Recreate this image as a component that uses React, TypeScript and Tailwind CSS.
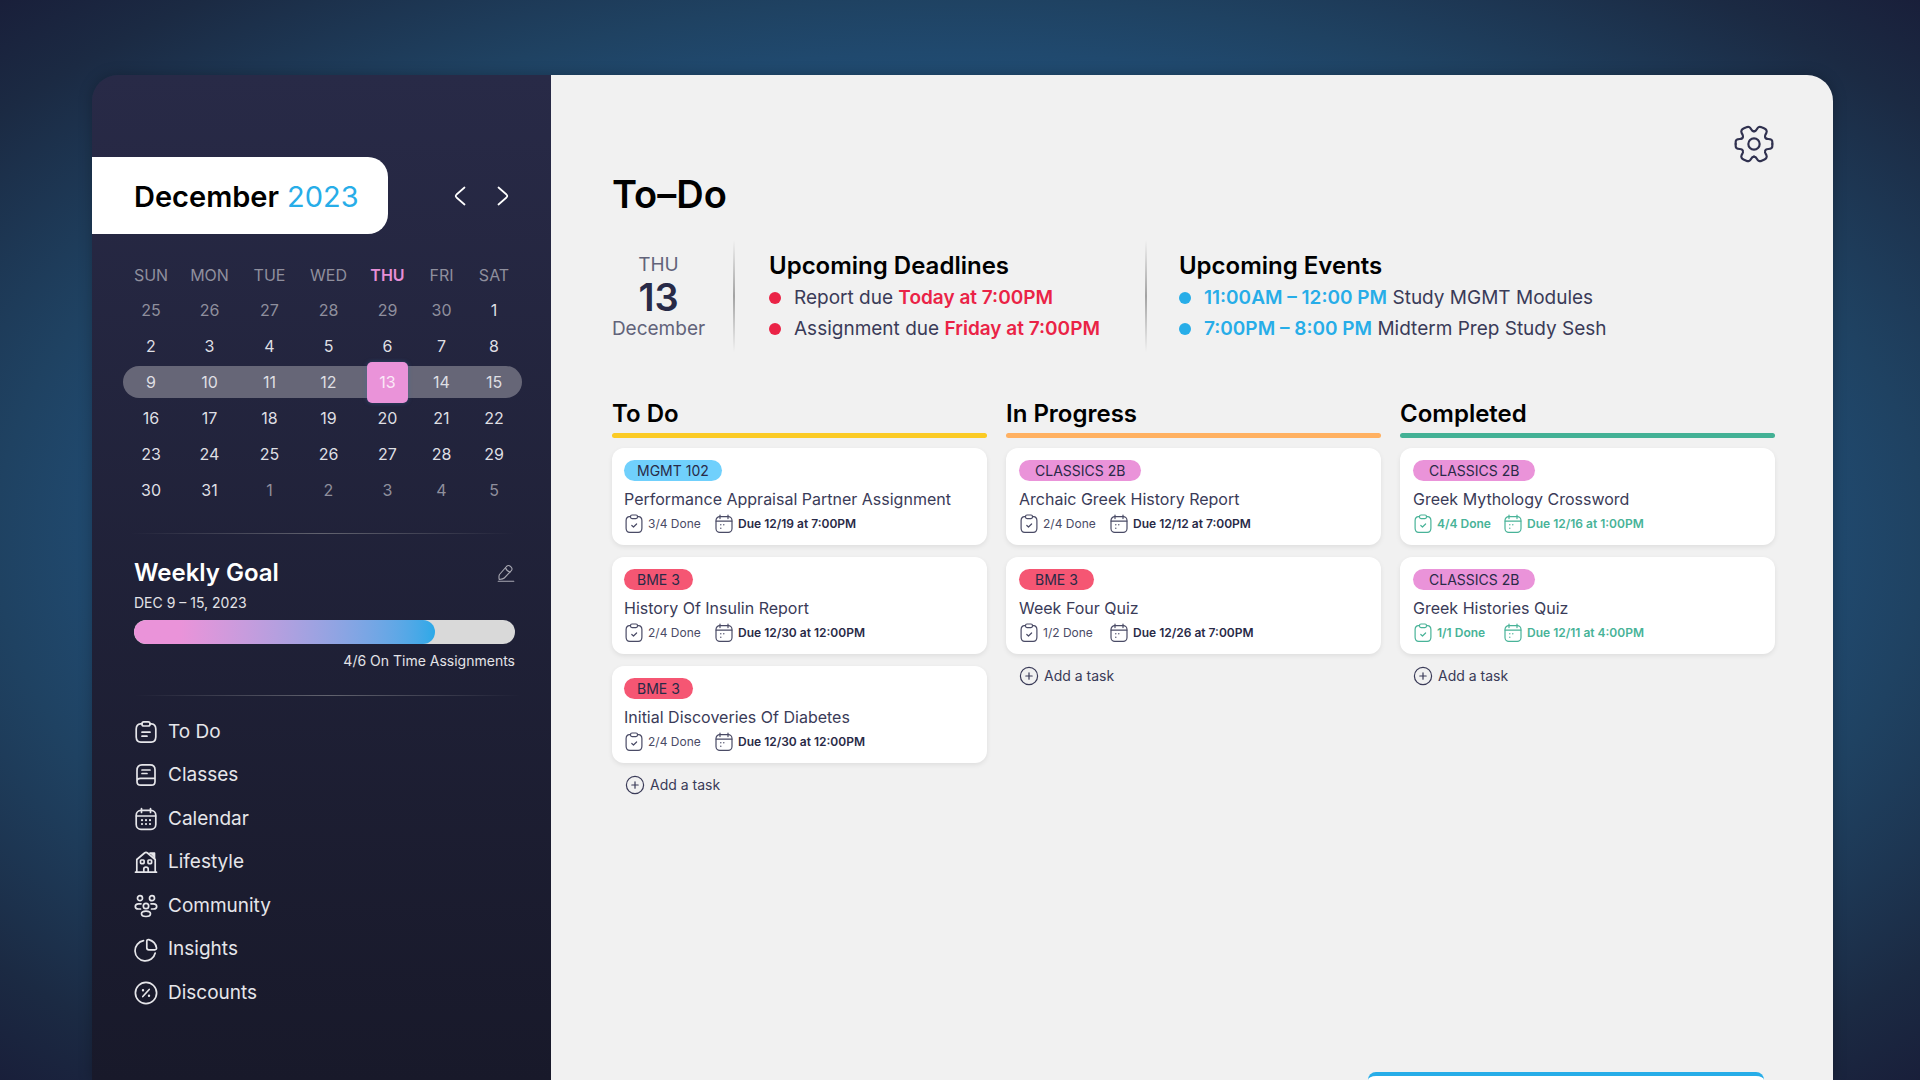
import type { ReactNode } from "react";
import clsx from "clsx";

type IconProps = { className?: string };

function Icon({ className, children, box = 24, stroke = 1.7 }: IconProps & { children: ReactNode; box?: number; stroke?: number }) {
  return (
    <svg
      aria-hidden="true"
      viewBox={`0 0 ${box} ${box}`}
      fill="none"
      stroke="currentColor"
      strokeWidth={stroke}
      strokeLinecap="round"
      strokeLinejoin="round"
      className={clsx("shrink-0", className)}
    >
      {children}
    </svg>
  );
}

const TodoIcon = () => (
  <Icon className="size-6">
    <path d="M8 3.8H6.5Q2.3 4 2.2 9v8q.2 5 4.6 5.2h10.4Q21.6 22 21.8 17V9Q21.7 4 17.5 3.8H16" />
    <rect x="8" y="1.8" width="8" height="4.2" rx="1.8" />
    <path d="M8 12.2h8M8 16.2h5" />
  </Icon>
);

const ClassesIcon = () => (
  <Icon className="size-6">
    <path d="M3 18V7.5Q3 1.800 8 1.800h8q5 0 5 5V18.5q0 3.700-3.700 3.700H6.800Q3 22.200 3 18.500q0-3.200 3.500-3.200H21" />
    <path d="M8 7h8M8 10.5h5" />
  </Icon>
);

const CalendarIcon = () => (
  <Icon className="size-6">
    <path d="M7.5 1.5v4M16.5 1.5v4M2.5 9h19" />
    <rect x="2.2" y="3.4" width="19.6" height="19" rx="4.8" />
    <path d="M8 13.2h.01M12 13.2h.01M16 13.2h.01M8 17h.01M12 17h.01M16 17h.01" strokeWidth="2.2" />
  </Icon>
);

const LifestyleIcon = () => (
  <Icon className="size-6">
    <path d="M1.5 22.2h21M2.8 22V9.5L10.5 3q1.5-1.2 3 0l7.7 6.5V22" />
    <path d="M16 3.2h4.5V8" fill="currentColor" />
    <rect x="6.5" y="10" width="3.6" height="3.6" rx=".8" />
    <rect x="14" y="10" width="3.6" height="3.6" rx=".8" />
    <path d="M9.800 22v-3q0-1.800 2.200-1.800t2.200 1.800v3" />
  </Icon>
);

const CommunityIcon = () => (
  <Icon className="size-6">
    <circle cx="6" cy="4.2" r="2.5" />
    <circle cx="18" cy="4.2" r="2.5" />
    <circle cx="12" cy="12" r="2.7" />
    <ellipse cx="12" cy="19.8" rx="4.5" ry="2.7" />
    <path d="M6.5 15H4.5Q1.3 14.8 1.3 12.4T4.5 9.800H7M17.500 15h2q3.200-.2 3.200-2.600T19.500 9.800H17" />
  </Icon>
);

const InsightsIcon = () => (
  <Icon className="size-6">
    <path d="M9.5 2.7A10.2 10.2 0 1 0 21.2 15" />
    <path d="M22.500 9.800Q21.500 3.500 14.800 1.600q-2-.2-2 1.800v6.400q0 2 2 2h6q1.900 0 1.700-2Z" />
  </Icon>
);

const DiscountsIcon = () => (
  <Icon className="size-6">
    <circle cx="12" cy="12" r="10.6" />
    <path d="M15.2 8.5 8.8 15.5" />
    <path d="M9 9.2h.01M15 14.8h.01" strokeWidth="2.4" />
  </Icon>
);

const DoneIcon = () => (
  <Icon className="size-5" box={20} stroke={1.2}>
    <path d="M6.500 2.600H5.500Q2.200 2.800 2.100 6.500v7.700q.1 4.100 3.700 4.200h8.400q3.600-.1 3.700-4.200V6.500q-.1-3.700-3.400-3.900H13.500" />
    <rect x="6.5" y="1" width="7" height="3.6" rx="1.5" />
    <path d="m7.800 11.500 1.700 1.500 3.100-3" />
  </Icon>
);

const DueIcon = () => (
  <Icon className="size-5" box={20} stroke={1.2}>
    <path d="M6 1v3.6M14 1v3.6M2.2 7.2h15.6" />
    <rect x="2" y="2.6" width="16" height="15.8" rx="3.8" />
    <path d="M6.8 10.8h.01M9.8 10.8h.01M6.8 14.2h.01" strokeWidth="1.4" />
  </Icon>
);

const AddIcon = () => (
  <Icon className="size-5" box={20} stroke={1.2}>
    <circle cx="10" cy="10" r="8.6" />
    <path d="M10 6.8v6.4M6.8 10h6.4" />
  </Icon>
);

const EditIcon = () => (
  <Icon className="size-[18px]" box={18} stroke={1.1}>
    <path d="M2.5 10.5 9.500 2.500q2-2 4 0 2.600 2 .8 4.200L7.300 14q-1 1-5.100 1.500-.6-3.500.3-5Z" />
    <path d="M8.500 3.800q1.200 3.400 4.600 4.200M1.200 17.300h15.600" />
  </Icon>
);

function GearIcon() {
  const quarter =
    "M0-38C4-38 7-41 9-45C12-51 17-53 23-50L30-47C37-44 40-39 37-33C35-29 32-25 33-22C34-17 38-15 43-15C51-15 55-12 55-6V0";
  return (
    <svg aria-hidden="true" viewBox="-60 -60 120 120" fill="none" stroke="currentColor" strokeWidth="6.5" strokeLinecap="round" className="size-10">
      <path d={quarter} />
      <path d={quarter} transform="scale(-1 1)" />
      <path d={quarter} transform="scale(1 -1)" />
      <path d={quarter} transform="scale(-1 -1)" />
      <circle r="17" />
    </svg>
  );
}

const weekdays = [
  { name: "SUN", width: "w-[56px]" },
  { name: "MON", width: "w-[61px]" },
  { name: "TUE", width: "w-[59px]" },
  { name: "WED", width: "w-[59px]" },
  { name: "THU", width: "w-[59px]" },
  { name: "FRI", width: "w-[49px]" },
  { name: "SAT", width: "w-[56px]" },
];

const weeks = [
  [25, 26, 27, 28, 29, 30, 1],
  [2, 3, 4, 5, 6, 7, 8],
  [9, 10, 11, 12, 13, 14, 15],
  [16, 17, 18, 19, 20, 21, 22],
  [23, 24, 25, 26, 27, 28, 29],
  [30, 31, 1, 2, 3, 4, 5],
];

const navItems = [
  { label: "To Do", icon: <TodoIcon /> },
  { label: "Classes", icon: <ClassesIcon /> },
  { label: "Calendar", icon: <CalendarIcon /> },
  { label: "Lifestyle", icon: <LifestyleIcon /> },
  { label: "Community", icon: <CommunityIcon /> },
  { label: "Insights", icon: <InsightsIcon /> },
  { label: "Discounts", icon: <DiscountsIcon /> },
];

type Task = { course: string; title: string; done: string; due: string };

const courseColors: Record<string, string> = {
  "MGMT 102": "bg-[#70d0fc]",
  "BME 3": "bg-[#f55673]",
  "CLASSICS 2B": "bg-[#ea93d9]",
};

const columns: { title: string; bar: string; inset: string; tag: string; complete?: boolean; tasks: Task[] }[] = [
  {
    title: "To Do",
    bar: "bg-[#fbcb25]",
    inset: "px-3",
    tag: "px-[13px]",
    tasks: [
      { course: "MGMT 102", title: "Performance Appraisal Partner Assignment", done: "3/4 Done", due: "Due 12/19 at 7:00PM" },
      { course: "BME 3", title: "History Of Insulin Report", done: "2/4 Done", due: "Due 12/30 at 12:00PM" },
      { course: "BME 3", title: "Initial Discoveries Of Diabetes", done: "2/4 Done", due: "Due 12/30 at 12:00PM" },
    ],
  },
  {
    title: "In Progress",
    bar: "bg-[#ffb162]",
    inset: "px-[13px]",
    tag: "px-4",
    tasks: [
      { course: "CLASSICS 2B", title: "Archaic Greek History Report", done: "2/4 Done", due: "Due 12/12 at 7:00PM" },
      { course: "BME 3", title: "Week Four Quiz", done: "1/2 Done", due: "Due 12/26 at 7:00PM" },
    ],
  },
  {
    title: "Completed",
    bar: "bg-[#43b195]",
    inset: "px-[13px]",
    tag: "px-4",
    complete: true,
    tasks: [
      { course: "CLASSICS 2B", title: "Greek Mythology Crossword", done: "4/4 Done", due: "Due 12/16 at 1:00PM" },
      { course: "CLASSICS 2B", title: "Greek Histories Quiz", done: "1/1 Done", due: "Due 12/11 at 4:00PM" },
    ],
  },
];

function Calendar() {
  return (
    <table className="mt-6 ml-[31px] w-[399px] table-fixed border-collapse text-center text-base text-[#dfdfe3]">
      <thead>
        <tr className="h-[34px]">
          {weekdays.map((day) => (
            <th
              key={day.name}
              scope="col"
              className={clsx("p-0", day.width, day.name === "THU" ? "font-semibold text-[#e78ed6]" : "font-normal text-[#8f8f9d]")}
            >
              {day.name}
            </th>
          ))}
        </tr>
      </thead>
      <tbody>
        {weeks.map((week, row) => (
          <tr key={row} className="h-9">
            {week.map((date, column) => {
              const outside = (row === 0 && date > 20) || (row === 5 && date < 10);
              const current = row === 2;
              return (
                <td key={column} className="p-0">
                  <div
                    className={clsx(
                      "flex h-8 items-center justify-center",
                      outside && "text-[#8f8f9d]",
                      current && "bg-[#666677]",
                      current && column === 0 && "rounded-l-full",
                      current && column === 6 && "rounded-r-full",
                    )}
                  >
                    {current && date === 13 ? (
                      <span className="flex size-[41px] shrink-0 items-center justify-center rounded-[5px] bg-[#ea93d9] text-[#fbe9f7] shadow-[0_0_4px_#3a6f9e80]">
                        13
                      </span>
                    ) : (
                      date
                    )}
                  </div>
                </td>
              );
            })}
          </tr>
        ))}
      </tbody>
    </table>
  );
}

const Divider = ({ className }: { className: string }) => (
  <hr className={clsx("h-px border-0 bg-linear-to-r from-transparent via-[#62636f] to-transparent", className)} />
);

function Sidebar() {
  return (
    <aside className="flex w-[459px] shrink-0 flex-col bg-linear-to-b from-[#282a47] to-[#18192a] pt-[82px]">
      <div className="flex items-center">
        <h2 className="flex h-[77px] w-[296px] items-center gap-2 rounded-r-[20px] bg-white pt-[3px] pl-[42px] text-[29px] font-semibold text-black">
          December <span className="font-normal text-[#27ade8]">2023</span>
        </h2>
        <div className="ml-[66px] flex gap-[31px] text-white">
          <button type="button" aria-label="Previous month">
            <svg viewBox="0 0 12 20" fill="none" stroke="currentColor" strokeWidth="1.7" strokeLinecap="round" strokeLinejoin="round" className="h-5 w-3">
              <path d="M10.500 1.500 2.500 8.500q-1.500 1.500 0 3l8 7" />
            </svg>
          </button>
          <button type="button" aria-label="Next month">
            <svg viewBox="0 0 12 20" fill="none" stroke="currentColor" strokeWidth="1.7" strokeLinecap="round" strokeLinejoin="round" className="h-5 w-3">
              <path d="m1.500 1.500 8 7q1.500 1.500 0 3l-8 7" />
            </svg>
          </button>
        </div>
      </div>

      <Calendar />

      <Divider className="mt-[25px] mr-[36px] ml-[38px]" />

      <section className="mt-[23px] mr-[36px] ml-[42px] text-[#e3e3e7]">
        <div className="flex items-center justify-between">
          <h2 className="text-2xl font-semibold text-white">Weekly Goal</h2>
          <button type="button" aria-label="Edit weekly goal" className="text-[#a8a8b2]">
            <EditIcon />
          </button>
        </div>
        <p className="mt-1 text-sm">DEC 9 – 15, 2023</p>
        <div className="mt-[7px] h-6 overflow-hidden rounded-full bg-[#d9d9d9]" role="progressbar" aria-label="On time assignments" aria-valuemin={0} aria-valuemax={6} aria-valuenow={4}>
          <div className="h-full w-[79%] rounded-full bg-linear-to-r from-[#ea93d9] from-15% to-[#2ba9e8]" />
        </div>
        <p className="mt-[7px] text-right text-sm">4/6 On Time Assignments</p>
      </section>

      <Divider className="mt-6 mr-[30px] ml-[42px]" />

      <nav aria-label="Main" className="mt-[14px] ml-[42px]">
        <ul className="grid h-[305px] auto-rows-fr">
          {navItems.map((item) => (
            <li key={item.label} className="flex">
              <a href="#" className="flex items-center gap-[10px] text-[19px] text-[#e6e6ea]">
                {item.icon}
                {item.label}
              </a>
            </li>
          ))}
        </ul>
      </nav>
    </aside>
  );
}

const Separator = () => <div className="w-[2px] self-stretch bg-linear-to-b from-transparent via-[#a3a3a3] to-transparent" />;

function Agenda({ title, dot, className, children }: { title: string; dot: string; className: string; children: ReactNode[] }) {
  return (
    <section className={clsx("pt-[10px]", className)}>
      <h2 className="text-2xl font-semibold text-black">{title}</h2>
      <ul className="text-[19px] leading-[31px] text-[#3a3b58]">
        {children.map((line, index) => (
          <li key={index} className="flex items-center gap-[13px]">
            <span className={clsx("size-3 shrink-0 rounded-full", dot)} />
            <span>{line}</span>
          </li>
        ))}
      </ul>
    </section>
  );
}

function TaskCard({ task, inset, tag, complete }: { task: Task; inset: string; tag: string; complete?: boolean }) {
  return (
    <li className={clsx("rounded-xl bg-white pt-3 pb-[11px] shadow-[0_2px_5px_#00000014]", inset)}>
      <p className={clsx("flex h-[21px] w-fit items-center rounded-full text-sm text-[#292a47]", tag, courseColors[task.course])}>
        {task.course}
      </p>
      <h3 className="mt-[6px] text-base text-[#3a3b58]">{task.title}</h3>
      <div className={clsx("mt-[3px] flex text-xs", complete ? "font-semibold text-[#48b398]" : "text-[#4a4b66]")}>
        <span className="flex w-[90px] items-center gap-1">
          <DoneIcon />
          {task.done}
        </span>
        <span className="flex items-center gap-1">
          <DueIcon />
          <span className={clsx("font-semibold", !complete && "text-[#292a47]")}>{task.due}</span>
        </span>
      </div>
    </li>
  );
}

export default function App() {
  return (
    <div className="flex h-screen min-h-[600px] overflow-hidden bg-[radial-gradient(ellipse_at_center,#22527c_50%,#20496e_64%,#1f4262_71%,#1b2a43_90%,#191f3a_100%)] pt-[75px] pr-[87px] pl-[92px] font-['Inter',sans-serif]">
      <div className="flex min-w-0 grow overflow-hidden rounded-t-[26px] shadow-[0_0_14px_#00000040]">
        <Sidebar />
        <main className="relative min-w-0 grow bg-[#f1f1f1] pr-[58px] pl-[61px]">
          <div className="flex justify-end pt-[49px] pr-px">
            <button type="button" aria-label="Settings" className="text-[#30314f]">
              <GearIcon />
            </button>
          </div>
          <h1 className="mt-[6px] text-[38px] leading-[48px] font-semibold text-black">To–Do</h1>

          <div className="mt-[22px] flex h-28">
            <p className="flex w-[93px] flex-col items-center justify-center pt-[2px] text-[19px] leading-6 text-[#62637a]">
              <span>THU</span>
              <span className="text-[38px] leading-10 font-semibold text-[#282a47]">13</span>
              <span>December</span>
            </p>
            <div className="ml-7 flex">
              <Separator />
              <Agenda title="Upcoming Deadlines" dot="bg-[#ea2346]" className="pr-[45px] pl-[34px]">
                <>
                  Report due <strong className="font-semibold text-[#ea2346]">Today at 7:00PM</strong>
                </>
                <>
                  Assignment due <strong className="font-semibold text-[#ea2346]">Friday at 7:00PM</strong>
                </>
              </Agenda>
              <Separator />
              <Agenda title="Upcoming Events" dot="bg-[#27ade8]" className="pl-8">
                <>
                  <strong className="font-semibold text-[#27ade8]">11:00AM – 12:00 PM</strong> Study MGMT Modules
                </>
                <>
                  <strong className="font-semibold text-[#27ade8]">7:00PM – 8:00 PM</strong> Midterm Prep Study Sesh
                </>
              </Agenda>
            </div>
          </div>

          <div className="mt-[46px] grid grid-cols-3 gap-[19px]">
            {columns.map((column) => (
              <section key={column.title}>
                <h2 className="text-2xl font-semibold text-black">{column.title}</h2>
                <div className={clsx("mt-[3px] h-[5px] rounded-full", column.bar)} />
                <ul className="mt-[10px] flex flex-col gap-3">
                  {column.tasks.map((task) => (
                    <TaskCard key={task.title} task={task} inset={column.inset} tag={column.tag} complete={column.complete} />
                  ))}
                </ul>
                <button type="button" className="mt-3 ml-[13px] flex items-center gap-[5px] text-sm text-[#3a3b58]">
                  <AddIcon />
                  Add a task
                </button>
              </section>
            ))}
          </div>

          <div className="absolute right-[69px] bottom-0 h-2 w-[396px] rounded-t-[14px] border-t-4 border-[#27ade8] bg-white" />
        </main>
      </div>
    </div>
  );
}
